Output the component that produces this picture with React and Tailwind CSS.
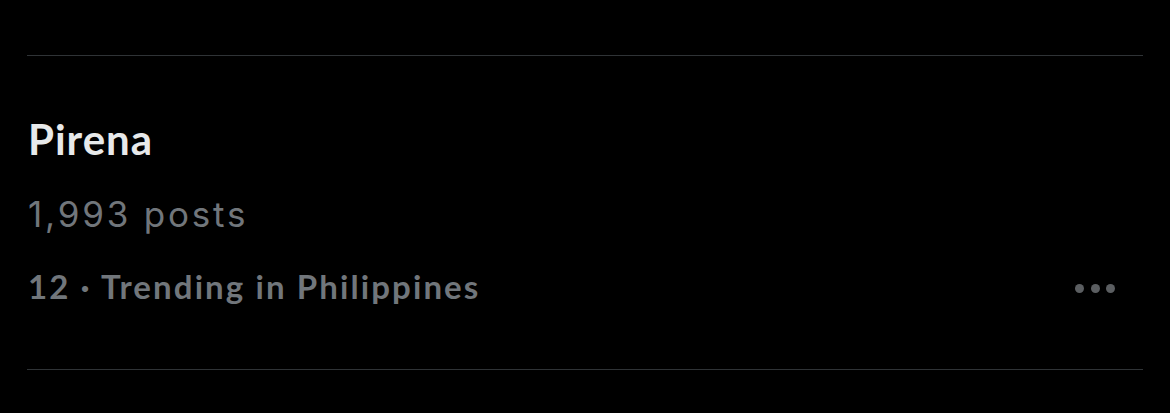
import React from 'react';

const TrendRow = ({ title, posts, rank, place }) => (
  <div className="border-y border-[#2f3336] pt-[62px] pb-[66px] pl-[1px]">
    <h2 className="text-[42px] leading-[42px] font-bold text-[#e7e9ea] tracking-[1px]" style={{ fontFamily: 'Lato, sans-serif' }}>
      {title}
    </h2>
    <p className="mt-[37px] text-[35px] leading-[35px] text-[#71767b] tracking-[2.8px]" style={{ fontFamily: 'Inter, sans-serif' }}>
      {posts}
    </p>
    <div className="mt-[38px] flex items-center justify-between">
      <span className="text-[33px] leading-[33px] font-bold text-[#71767b] tracking-[2.1px]" style={{ fontFamily: 'Lato, sans-serif' }}>
        {rank} · {place}
      </span>
      <button className="mr-[28px] mt-[3px] flex items-center gap-[6.5px]">
        <span className="h-[9px] w-[9px] rounded-full bg-[#5b5e61]" />
        <span className="h-[9px] w-[9px] rounded-full bg-[#5b5e61]" />
        <span className="h-[9px] w-[9px] rounded-full bg-[#5b5e61]" />
      </button>
    </div>
  </div>
);

export default function App() {
  return (
    <div className="min-h-[413px] w-[1170px] bg-black pt-[55px] pl-[27px] pr-[27px]">
      <TrendRow title="Pirena" posts="1,993 posts" rank="12" place="Trending in Philippines" />
    </div>
  );
}
